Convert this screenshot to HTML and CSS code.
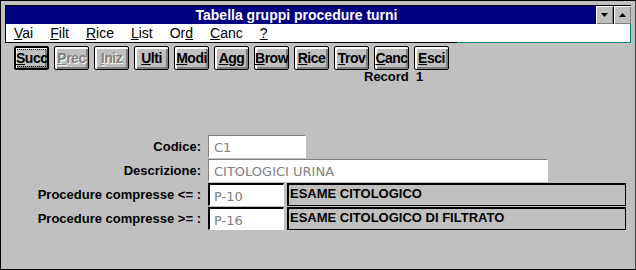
FILE: index.html
```html
<!DOCTYPE html>
<html>
<head>
    <title>Tabella gruppi procedure turni</title>
    <meta charset="utf-8" />
    <link rel="stylesheet" href="styles.css">
</head>
<body>
    <div class="window">
        <div class="titlebar">
            <span class="title-text">Tabella gruppi procedure turni</span>
            <div class="title-btns">
                <span class="tb-btn"><svg width="7" height="4" viewBox="0 0 7 4"><path d="M0 0h7L3.5 4z" fill="#000"/></svg></span>
                <span class="tb-btn"><svg width="7" height="4" viewBox="0 0 7 4"><path d="M0 4h7L3.5 0z" fill="#000"/></svg></span>
            </div>
        </div>
        <div class="menubar">
            <span><u>V</u>ai</span>
            <span><u>F</u>ilt</span>
            <span><u>R</u>ice</span>
            <span><u>L</u>ist</span>
            <span>Or<u>d</u></span>
            <span><u>C</u>anc</span>
            <span><u>?</u></span>
        </div>
        <div class="client">
            <div class="toolbar">
                <button class="btn btn-default"><span class="focus"><u>S</u>ucc</span></button>
                <button class="btn" disabled><u>P</u>rec</button>
                <button class="btn" disabled><u>I</u>niz</button>
                <button class="btn"><u>U</u>lti</button>
                <button class="btn"><u>M</u>odi</button>
                <button class="btn"><u>A</u>gg</button>
                <button class="btn"><u>B</u>row</button>
                <button class="btn"><u>R</u>ice</button>
                <button class="btn"><u>T</u>rov</button>
                <button class="btn"><u>C</u>anc</button>
                <button class="btn"><u>E</u>sci</button>
            </div>
            <div class="record">Record&nbsp; 1</div>

            <div class="form">
                <label>Codice:</label>
                <div class="row">
                    <span class="field field-ro w-code">C1</span>
                </div>
                <label>Descrizione:</label>
                <div class="row">
                    <span class="field field-ro w-desc">CITOLOGICI URINA</span>
                </div>
                <label>Procedure compresse &lt;= :</label>
                <div class="row">
                    <span class="field field-edit w-proc">P-10</span>
                    <span class="lookup">ESAME CITOLOGICO</span>
                </div>
                <label>Procedure compresse &gt;= :</label>
                <div class="row">
                    <span class="field field-edit w-proc">P-16</span>
                    <span class="lookup">ESAME CITOLOGICO DI FILTRATO</span>
                </div>
            </div>
        </div>
    </div>
</body>
</html>
```

FILE: styles.css
```css
body {
    margin: 0;
    background: #c0c0c0;
    font-family: 'Liberation Sans', Arial, sans-serif;
    font-size: 12px;
}
.window {
    width: 636px;
    height: 270px;
    box-sizing: border-box;
    border: 1px solid #000;
    border-right-color: #404040;
    background: #c0c0c0;
    padding: 4px 4px 0 4px;
    display: flex;
    flex-direction: column;
}
.titlebar {
    height: 18px;
    background: #000080;
    border-left: 1px solid #000;
    border-top: 1px solid #000;
    display: flex;
    align-items: center;
}
.title-text {
    flex: 1;
    text-align: center;
    color: #fff;
    font-weight: bold;
    font-size: 14px;
    padding-right: 8px;
}
.title-btns {
    display: flex;
    align-self: stretch;
}
.tb-btn {
    width: 18px;
    height: 18px;
    box-sizing: border-box;
    background: #c0c0c0;
    border-left: 1px solid #000;
    box-shadow: inset 1px 1px #fff, inset -1px -1px #808080;
    display: flex;
    align-items: center;
    justify-content: center;
}
.menubar {
    height: 19px;
    box-sizing: border-box;
    background: linear-gradient(to right, #000 451px, #008080 451px) bottom / 100% 1px no-repeat, #fff;
    border-left: 1px solid #000;
    border-right: 1px solid #008080;
    display: flex;
    align-items: center;
    gap: 17px;
    padding: 0 0 1px 8px;
    font-size: 14px;
    color: #000;
}
.client {
    margin-left: -4px;
    flex: 1;
}
.toolbar {
    display: flex;
    gap: 5px;
    padding: 3px 0 0 13px;
}
.btn {
    width: 35px;
    height: 24px;
    box-sizing: border-box;
    padding: 0;
    background: #c0c0c0;
    border: 1px solid #000;
    border-radius: 2px;
    box-shadow: inset 1px 1px #fff, inset 2px 2px #fff, inset -1px -1px #808080, inset -2px -2px #808080;
    font-family: 'Liberation Sans', Arial, sans-serif;
    font-weight: bold;
    font-size: 14px;
    color: #000;
    letter-spacing: -0.5px;
}
.btn:disabled {
    color: #808080;
    text-shadow: 1px 1px #fff;
}
.btn-default {
    border-width: 2px;
    box-shadow: inset 1px 1px #fff, inset -1px -1px #808080, inset -2px -2px #808080;
}
.focus {
    outline: 1px dotted #000;
    outline-offset: 0;
}
.record {
    margin: -1px 0 0 363px;
    font-weight: bold;
    font-size: 13px;
}
.form {
    display: grid;
    grid-template-columns: 200px auto;
    column-gap: 7px;
    row-gap: 1px;
    margin-top: 51px;
    align-items: center;
}
.form label {
    text-align: right;
    font-weight: bold;
    font-size: 13px;
}
.row {
    display: flex;
    gap: 3px;
}
.field {
    height: 23px;
    box-sizing: border-box;
    background: #fff;
    color: #808080;
    padding: 4px 0 0 5px;
    font-family: 'DejaVu Sans', sans-serif;
    font-size: 13px;
}
.field-ro {
    border-top: 1px solid #808080;
    border-left: 1px solid #808080;
    border-right: 1px solid #fff;
    border-bottom: 1px solid #fff;
}
.field-edit {
    border-top: 2px solid #000;
    border-left: 2px solid #000;
    border-right: 1px solid #fff;
    border-bottom: 1px solid #fff;
    padding-top: 4px;
    padding-left: 4px;
}
.w-code { width: 98px; }
.w-desc { width: 340px; }
.w-proc { width: 76px; }
.lookup {
    width: 339px;
    height: 23px;
    box-sizing: border-box;
    border: 1px solid #000;
    border-top-width: 2px;
    border-left-width: 2px;
    padding: 1px 0 0 1px;
    font-weight: bold;
    font-size: 13px;
}
```
